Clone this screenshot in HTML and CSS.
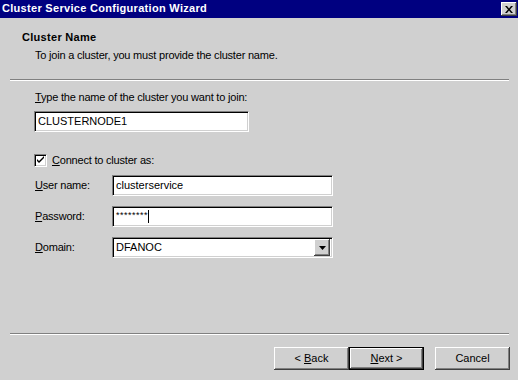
FILE: index.html
```html
<!DOCTYPE html>
<html>
<head>
<title>Cluster Service Configuration Wizard</title>
<link rel="stylesheet" href="styles.css">
</head>
<body>
<div class="window">
	<div class="titlebar">
		<span class="title_text">Cluster Service Configuration Wizard</span>
		<div class="close_btn">
			<svg width="8" height="7" viewBox="0 0 8 7"><path d="M0 0h2l2 2.5 2-2.5h2L5 3.5 8 7H6L4 4.5 2 7H0l3-3.5z" fill="#000"/></svg>
		</div>
	</div>

	<div class="header">
		<div class="page_title">Cluster Name</div>
		<div class="page_sub">To join a cluster, you must provide the cluster name.</div>
	</div>
	<div class="separator"></div>

	<div class="content">
		<div class="label"><u>T</u>ype the name of the cluster you want to join:</div>
		<div class="field cluster_field">CLUSTERNODE1</div>

		<div class="check_row">
			<div class="checkbox">
				<svg width="9" height="9" viewBox="0 0 9 9"><path d="M1 3v2l2 2 5-5V0L3 5z" fill="#000"/></svg>
			</div>
			<span><u>C</u>onnect to cluster as:</span>
		</div>

		<div class="creds">
			<div class="cred_label"><u>U</u>ser name:</div>
			<div class="field">clusterservice</div>
			<div class="cred_label"><u>P</u>assword:</div>
			<div class="field"><span class="stars">********</span><span class="caret"></span></div>
			<div class="cred_label"><u>D</u>omain:</div>
			<div class="field combo">
				<span class="combo_value">DFANOC</span>
				<div class="combo_btn">
					<svg width="7" height="4" viewBox="0 0 7 4"><path d="M0 0h7L3.5 4z" fill="#000"/></svg>
				</div>
			</div>
		</div>
	</div>

	<div class="separator bottom_sep"></div>
	<div class="buttons">
		<div class="btn"><span>&lt;&nbsp;<u>B</u>ack</span></div>
		<div class="btn default_btn"><span><u>N</u>ext&nbsp;&gt;</span></div>
		<div class="btn cancel_btn"><span>Cancel</span></div>
	</div>
</div>
</body>
</html>
```

FILE: styles.css
```css
body {
	margin: 0;
	background: #d0d0d0;
	font-family: "Liberation Sans", Arial, sans-serif;
	font-size: 11px;
	line-height: 13px;
	color: #000;
}
.window {
	width: 518px;
	height: 380px;
	overflow: hidden;
}
.titlebar {
	height: 18px;
	background: #000080;
	display: flex;
	justify-content: space-between;
	align-items: flex-start;
	padding-left: 2px;
}
.title_text {
	color: #fff;
	font-weight: bold;
	line-height: 17px;
	letter-spacing: 0.3px;
}
.close_btn {
	box-sizing: border-box;
	width: 16px;
	height: 14px;
	margin-top: 2px;
	margin-right: 1px;
	background: #d0d0d0;
	box-shadow: inset -1px -1px #404040, inset 1px 1px #fff, inset -2px -2px #808080;
	display: flex;
	align-items: center;
	justify-content: center;
	padding-right: 1px;
}
.page_title {
	font-weight: bold;
	margin-top: 13px;
	padding-left: 22px;
	letter-spacing: 0.3px;
}
.page_sub {
	margin-top: 5px;
	padding-left: 35px;
	letter-spacing: -0.2px;
}
.separator {
	margin: 17px 0 0 10px;
	width: 499px;
	border-top: 1px solid #808080;
	border-bottom: 1px solid #fff;
}
.content {
	padding-left: 34px;
}
.label {
	margin-top: 10px;
	padding-left: 1px;
	letter-spacing: -0.2px;
}
.field {
	box-sizing: border-box;
	height: 21px;
	background: #fff;
	border-top: 1px solid #808080;
	border-left: 1px solid #808080;
	border-right: 1px solid #fff;
	border-bottom: 1px solid #fff;
	box-shadow: inset 1px 1px #000, inset -1px -1px #d0d0d0;
	padding: 3px 0 0 3px;
	white-space: nowrap;
	display: flex;
	align-items: flex-start;
}
.cluster_field {
	width: 215px;
	margin-top: 7px;
}
.check_row {
	display: flex;
	align-items: center;
	margin-top: 22px;
	height: 13px;
	letter-spacing: -0.2px;
}
.checkbox {
	box-sizing: border-box;
	width: 13px;
	height: 13px;
	margin-right: 5px;
	background: #fff;
	border-top: 1px solid #808080;
	border-left: 1px solid #808080;
	border-right: 1px solid #fff;
	border-bottom: 1px solid #fff;
	box-shadow: inset 1px 1px #000, inset -1px -1px #d0d0d0;
	display: flex;
	align-items: center;
	justify-content: center;
}
.creds {
	display: grid;
	grid-template-columns: 78px 221px;
	row-gap: 10px;
	margin-top: 8px;
	align-items: center;
}
.cred_label {
	padding-left: 1px;
	letter-spacing: -0.2px;
}
.stars {
	font-size: 9px;
	line-height: 9px;
	letter-spacing: 0.5px;
	margin-top: 1px;
}
.caret {
	width: 1px;
	height: 13px;
	background: #000;
	margin-left: 0;
}
.combo {
	justify-content: space-between;
	padding: 0 2px 0 3px;
	align-items: center;
}
.combo_btn {
	box-sizing: border-box;
	width: 16px;
	height: 17px;
	background: #d0d0d0;
	box-shadow: inset -1px -1px #404040, inset 1px 1px #fff, inset -2px -2px #808080;
	display: flex;
	align-items: center;
	justify-content: center;
}
.bottom_sep {
	margin-top: 75px;
}
.buttons {
	display: flex;
	margin-top: 12px;
	padding-left: 274px;
}
.btn {
	box-sizing: border-box;
	width: 75px;
	height: 23px;
	background: #d0d0d0;
	box-shadow: inset -1px -1px #404040, inset 1px 1px #fff, inset -2px -2px #808080;
	display: flex;
	align-items: center;
	justify-content: center;
}
.default_btn {
	border: 1px solid #000;
}
.cancel_btn {
	margin-left: 11px;
}
```
